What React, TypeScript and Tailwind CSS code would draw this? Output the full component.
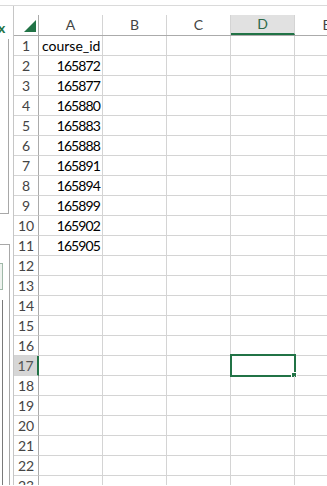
import type { ReactNode } from 'react';

const COLS = ['A', 'B', 'C', 'D', 'E'];
const VALUES: Record<number, string> = {
  1: 'course_id',
  2: '165872',
  3: '165877',
  4: '165880',
  5: '165883',
  6: '165888',
  7: '165891',
  8: '165894',
  9: '165899',
  10: '165902',
  11: '165905',
};
const ROWS = Array.from({ length: 23 }, (_, i) => i + 1);
const SELECTED_ROW = 17;
const SELECTED_COL = 'D';

const gridCols = 'grid w-[345px] grid-cols-[25px_64px_64px_64px_64px_64px]';

function SidePane(): JSX.Element {
  return (
    <div className="flex h-full w-[14px] shrink-0 flex-col border-r border-[#c6c6c6] bg-white">
      <div className="h-[12px] shrink-0" />
      <div className="h-[20px] shrink-0 overflow-hidden">
        <span className="-ml-[2px] block text-[14px] font-bold leading-[20px] text-[#217346]">x</span>
      </div>
      <div className="h-[1px] shrink-0" />
      <div className="h-[175px] w-[9px] shrink-0 border-r border-b border-[#a8a8a8]" />
      <div className="h-[30px] shrink-0" />
      <div className="flex w-[10px] flex-1 flex-col border-r border-t border-[#a8a8a8]">
        <div className="h-[18px] shrink-0" />
        <div className="h-[27px] w-[3px] shrink-0 border-y border-r border-[#9fb8a8] bg-[#eef3ef]" />
        <div className="h-[10px] shrink-0" />
        <div className="ml-[2px] flex-1 border-l border-[#7a7a7a]" />
      </div>
    </div>
  );
}

function Cell({ children, className }: { children?: ReactNode; className?: string }): JSX.Element {
  return (
    <div className={`h-[20px] border-b border-r border-[#d4d4d4] ${className ?? ''}`}>{children}</div>
  );
}

export default function App(): JSX.Element {
  return (
    <div
      className="h-[486px] w-[327px] overflow-hidden bg-white"
      style={{ fontFamily: 'Lato, "Open Sans", "Liberation Sans", sans-serif' }}
    >
      <div className="h-[6px] border-b border-[#dadada]" />
      <div className="flex h-[479px]">
        <SidePane />
        <div className="min-w-0 flex-1 overflow-hidden">
          <div className="h-[9px]" />
          {/* column headers */}
          <div className={`${gridCols} h-[21px] border-b border-[#ababab]`}>
            <div className="relative border-r border-[#ababab]">
              <svg width="12" height="12" viewBox="0 0 12 12" className="absolute left-[10px] top-[5px]">
                <polygon points="12,0 12,12 0,12" fill="#217346" />
              </svg>
            </div>
            {COLS.map((c) => (
              <div
                key={c}
                className={`flex items-center justify-center border-r border-[#d4d4d4] text-[14px] leading-none ${
                  c === SELECTED_COL
                    ? 'border-b-2 border-b-[#217346] bg-[#e1e1e1] text-[#2d6a4a]'
                    : 'text-[#444]'
                }`}
              >
                {c}
              </div>
            ))}
          </div>
          {/* rows */}
          {ROWS.map((r) => {
            const sel = r === SELECTED_ROW;
            return (
              <div key={r} className={gridCols}>
                <div
                  className={`flex h-[20px] items-center justify-center border-b border-[#d4d4d4] text-[14px] leading-none ${
                    sel
                      ? 'border-r-2 border-r-[#217346] bg-[#d6d6d6] text-[#555]'
                      : 'border-r border-r-[#ababab] text-[#444]'
                  }`}
                >
                  {r}
                </div>
                <Cell
                  className={`flex items-center text-[14px] leading-none text-black ${
                    r === 1 ? 'justify-start pl-[3px]' : 'justify-end pr-[2px] tracking-[-0.9px]'
                  }`}
                >
                  {VALUES[r]}
                </Cell>
                <Cell />
                <Cell />
                <Cell className="relative">
                  {sel && (
                    <>
                      <div className="absolute -left-[1px] -top-[2px] h-[23px] w-[66px] border-2 border-[#217346]" />
                      <div className="absolute -bottom-[3px] -right-[3px] h-[6px] w-[6px] border border-white bg-[#217346]" />
                    </>
                  )}
                </Cell>
                <Cell />
              </div>
            );
          })}
        </div>
      </div>
    </div>
  );
}
